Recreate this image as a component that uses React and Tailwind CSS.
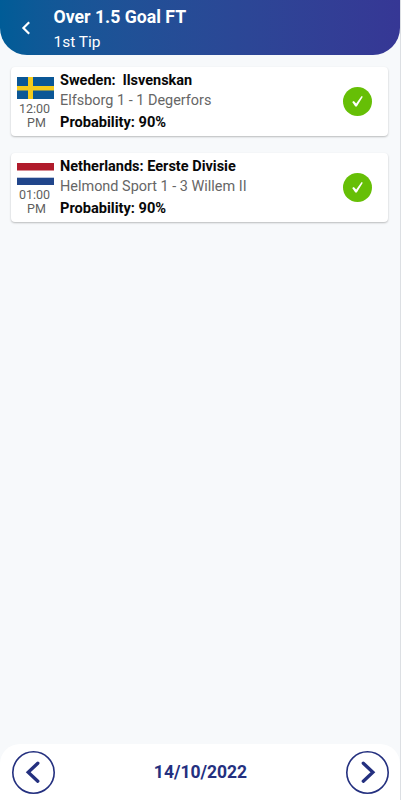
import React from "react";

function SwedenFlag() {
  return (
    <svg width="37" height="22" viewBox="0 0 37 22" className="block">
      <rect width="37" height="22" fill="#0b5796" />
      <rect x="11" width="5" height="22" fill="#f5cb1c" />
      <rect y="9" width="37" height="4.5" fill="#f5cb1c" />
    </svg>
  );
}

function NetherlandsFlag() {
  return (
    <svg width="37" height="22" viewBox="0 0 37 22" className="block">
      <rect width="37" height="22" fill="#fff" />
      <rect width="37" height="7.5" fill="#b01b2b" />
      <rect y="14.7" width="37" height="7.3" fill="#21468b" />
    </svg>
  );
}

const tips = [
  {
    flag: SwedenFlag,
    time: "12:00",
    period: "PM",
    league: "Sweden:  llsvenskan",
    match: "Elfsborg 1 - 1 Degerfors",
    probability: "90%",
  },
  {
    flag: NetherlandsFlag,
    time: "01:00",
    period: "PM",
    league: "Netherlands: Eerste Divisie",
    match: "Helmond Sport 1 - 3 Willem II",
    probability: "90%",
  },
];

function Header({ title, subtitle }) {
  return (
    <header className="flex h-[55px] shrink-0 rounded-b-[27px] bg-linear-to-r from-[#005c97] to-[#363795] text-white">
      <button className="flex w-[53.5px] shrink-0 justify-start pl-[21px] pt-[21px]" aria-label="Back">
        <svg width="10" height="14" viewBox="0 0 10 14" fill="none" stroke="currentColor" strokeWidth="2.2">
          <path d="M8.2 1.2 2.4 7l5.8 5.8" />
        </svg>
      </button>
      <div className="whitespace-nowrap pt-[6px]">
        <h1 className="text-[17.7px] font-bold leading-[23px]">{title}</h1>
        <p className="text-[15.5px] leading-[27px]">{subtitle}</p>
      </div>
    </header>
  );
}

function WonBadge() {
  return (
    <svg width="29" height="29" viewBox="0 0 29 29" className="block">
      <circle cx="14.5" cy="14.5" r="14.5" fill="#66bf06" />
      <path d="m9.2 14.9 1.6-1 2.4 2.5 5.4-7.5 1.2.8-6 9.8h-1.5z" fill="#fff" />
    </svg>
  );
}

function TipCard({ flag: Flag, time, period, league, match, probability }) {
  return (
    <article className="flex h-[69px] rounded-[4px] bg-white shadow-[0_1px_2px_rgba(0,0,0,0.25)]">
      <div className="flex w-[49px] shrink-0 flex-col pl-[6px] pt-[10px]">
        <Flag />
        <div className="w-[37px] pt-[3px] text-center text-[12.5px] leading-[14px] text-[#5f5f5f]">
          <div className="pr-[2px]">{time}</div>
          <div className="pl-[2px]">{period}</div>
        </div>
      </div>
      <div className="flex-1 whitespace-pre pt-[3px] text-[14.5px]">
        <div className="font-bold leading-[21px] text-[#080808]">{league}</div>
        <div className="text-[14.45px] leading-5 text-[#666]">{match}</div>
        <div className="pt-px text-[14.6px] font-bold leading-[21px] text-[#080808]">Probability: {probability}</div>
      </div>
      <div className="flex items-center pr-4">
        <WonBadge />
      </div>
    </article>
  );
}

function ArrowButton({ label, children }) {
  return (
    <button aria-label={label} className="text-[#24307f]">
      <svg width="43" height="43" viewBox="0 0 43 43" fill="none" stroke="currentColor" className="block">
        <circle cx="21.5" cy="21.5" r="20.7" strokeWidth="1.6" />
        {children}
      </svg>
    </button>
  );
}

function DateBar({ date }) {
  return (
    <footer className="flex h-14 shrink-0 items-center justify-between rounded-t-[20px] bg-white pl-3 pr-[11px]">
      <ArrowButton label="Previous day">
        <path d="m25.8 12.2-9.6 9 9.6 9" strokeWidth="3.3" strokeLinecap="round" />
      </ArrowButton>
      <span className="text-[17.5px] font-bold text-[#24307f]">{date}</span>
      <ArrowButton label="Next day">
        <path d="m17.3 12.2 9.6 9-9.6 9" strokeWidth="3.3" strokeLinecap="round" />
      </ArrowButton>
    </footer>
  );
}

export default function App() {
  return (
    <div className="flex h-[800px] w-[401px] flex-col overflow-hidden border-r border-[#dcdfe3] bg-[#f7f9fb] font-[Roboto,sans-serif]">
      <Header title="Over 1.5 Goal FT" subtitle="1st Tip" />
      <main className="flex flex-1 flex-col gap-[17px] pl-[11px] pr-3 pt-3">
        {tips.map((tip) => (
          <TipCard key={tip.league} {...tip} />
        ))}
      </main>
      <DateBar date="14/10/2022" />
    </div>
  );
}
